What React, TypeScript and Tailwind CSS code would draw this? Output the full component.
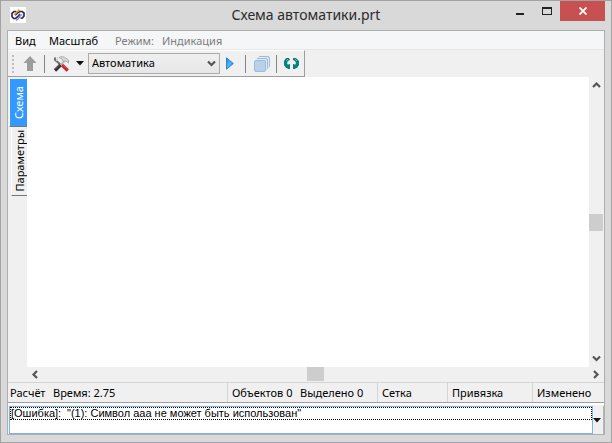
import { useState } from "react";

function AppLogo() {
  return (
    <svg width="16" height="16" viewBox="0 0 16 16" fill="none" aria-hidden="true" className="bg-white">
      <path d="M6.5 4.5H4L2 6.3V9.5L3.5 11.5H5.5L8 9.5L10 7" stroke="#2e2a5c" strokeWidth="1.7" />
      <path d="M5 8L8 5.5L10 4.5H12L14 6V9L12.5 11H10.5" stroke="#2e2a5c" strokeWidth="1.7" />
      <path d="M4.5 7.5L7 5L9.5 2.5" stroke="#f29a1f" strokeWidth="1.6" />
      <path d="M6 13.5L8.5 11.5L10 9L12 7.5" stroke="#8d89b8" strokeWidth="1.5" />
    </svg>
  );
}

function ArrowUpIcon() {
  return (
    <svg width="14" height="15" viewBox="0 0 14 15" aria-hidden="true">
      <path d="M7 0L13.5 7H10V15H4V7H0.5Z" fill="#9c9c9c" />
    </svg>
  );
}

function ToolsIcon() {
  return (
    <svg width="17" height="16" viewBox="0 0 17 16" fill="none" aria-hidden="true">
      <path d="M2 1.5V4L4 5.5L8 9" stroke="#6f6f6f" strokeWidth="2" />
      <path d="M4.5 1V3L3 4.5" stroke="#d6d6d6" strokeWidth="1.4" />
      <path d="M12 4.5L7 9.5" stroke="#b9bcbc" strokeWidth="2" />
      <path d="M6 1.5C8 0.2 11 0.4 13 2.2L15.5 4V7L12.8 5L10 5.4L9 3Z" fill="#d5d9d9" stroke="#9da2a2" strokeWidth="0.8" />
      <path d="M7.5 9L2 14.5" stroke="#303030" strokeWidth="3.2" />
      <path d="M6.5 9L2.5 13" stroke="#777" strokeWidth="0.8" />
      <path d="M9 9L14.8 14.5" stroke="#c91f2b" strokeWidth="3.2" />
      <path d="M10 9L14.5 13" stroke="#ee6b70" strokeWidth="0.8" />
    </svg>
  );
}

function PlayIcon() {
  return (
    <svg width="8" height="13" viewBox="0 0 8 13" aria-hidden="true">
      <defs>
        <linearGradient id="play" x1="0" x2="1" y1="0" y2="1">
          <stop offset="0" stopColor="#2f7fd0" />
          <stop offset="0.5" stopColor="#57b4f2" />
          <stop offset="1" stopColor="#1d7fd6" />
        </linearGradient>
      </defs>
      <path d="M0.5 0.8L7.3 6.5L0.5 12.2Z" fill="url(#play)" stroke="#2484d6" />
    </svg>
  );
}

function LayersIcon() {
  return (
    <svg width="16" height="16" viewBox="0 0 16 16" fill="#cadcee" stroke="#9dbddd" aria-hidden="true">
      <rect x="4.5" y="0.5" width="11" height="11" rx="1.5" />
      <rect x="3.5" y="1.5" width="11" height="11" rx="1.5" stroke="#dfeaf5" />
      <rect x="2.5" y="2.5" width="11" height="11" rx="1.5" />
      <rect x="1.5" y="3.5" width="11" height="11" rx="1.5" stroke="#dfeaf5" />
      <rect x="0.5" y="4.5" width="11" height="11" rx="1.5" fill="#b9d0e8" />
    </svg>
  );
}

function CycleIcon() {
  return (
    <svg width="15" height="11" viewBox="0 0 15 11" aria-hidden="true">
      <path d="M5 0H2L0 3V7L2 10H3L4 11H6V6H5L4 7L3 5L4 3L6 2Z" fill="#088080" />
      <path d="M9 0H12L15 3V7L13 10H12L11 11H9V6H10L11 7L12 5L11 3L9 2Z" fill="#088080" />
      <path d="M2 3L4 1M13 3L11 1" stroke="#70b5b5" />
    </svg>
  );
}

function Caret() {
  return (
    <svg width="8" height="5" viewBox="0 0 8 5" aria-hidden="true">
      <path d="M0 0H8L4 4.5Z" fill="#111" />
    </svg>
  );
}

const chevrons = {
  up: "M1 6L4.5 2.5L8 6",
  down: "M1 2.5L4.5 6L8 2.5",
  left: "M6 1L2.5 4.5L6 8",
  right: "M3 1L6.5 4.5L3 8",
};

function Chevron({ to }: { to: keyof typeof chevrons }) {
  return (
    <svg width="9" height="9" viewBox="0 0 9 9" fill="none" aria-hidden="true">
      <path d={chevrons[to]} stroke="#555" strokeWidth="2.2" />
    </svg>
  );
}

function Separator() {
  return <span className="h-[18px] w-px shrink-0 bg-[#858585]" />;
}

function TitleBar() {
  return (
    <header className="grid h-[29px] shrink-0 grid-cols-[1fr_auto_1fr] items-start">
      <div className="pt-1.5 pl-[9px]">
        <AppLogo />
      </div>
      <h1 className="pt-1 text-[14px] leading-5 text-[#2b2b2b]">Схема автоматики.prt</h1>
      <div className="flex justify-end pr-1.5">
        <button aria-label="Свернуть" className="flex h-5 w-[27px] items-center justify-center">
          <span className="mt-1.5 h-0.5 w-2 bg-[#222]" />
        </button>
        <button aria-label="Развернуть" className="flex h-5 w-[27px] items-center justify-center">
          <span className="h-2 w-2.5 border border-t-2 border-[#222]" />
        </button>
        <button aria-label="Закрыть" className="flex h-5 w-[45px] items-center justify-center bg-[#c75050]">
          <svg width="8" height="8" viewBox="0 0 8 8" aria-hidden="true">
            <path d="M0.5 0.5L7.5 7.5M7.5 0.5L0.5 7.5" stroke="#fff" strokeWidth="1.8" />
          </svg>
        </button>
      </div>
    </header>
  );
}

function MenuBar() {
  return (
    <nav className="flex h-[18px] shrink-0 items-end bg-[#f5f6f7] pl-[7px] text-[11px] leading-4">
      <button className="w-[34px] text-left">Вид</button>
      <button className="w-[66px] text-left">Масштаб</button>
      <span className="w-[47px] text-[#7d7d7d]">Режим:</span>
      <span className="text-[#7d7d7d]">Индикация</span>
    </nav>
  );
}

function Toolbar() {
  return (
    <div className="flex h-7 shrink-0 border-t border-[#e6e6e6]">
      <div className="flex w-[297px] items-center border-r border-b border-t border-t-white border-[#9d9d9d] pl-1">
        <span className="flex flex-col gap-0.5">
          {[0, 1, 2, 3, 4].map((dot) => (
            <i key={dot} className="size-0.5 bg-[#bdbdbd]" />
          ))}
        </span>
        <button aria-label="Вверх" className="ml-[9px]">
          <ArrowUpIcon />
        </button>
        <span className="w-[7px]" />
        <Separator />
        <button aria-label="Инструменты" className="ml-2">
          <ToolsIcon />
        </button>
        <button aria-label="Список инструментов" className="ml-1.5">
          <Caret />
        </button>
        <div className="relative ml-1 w-[132px]">
          <select
            aria-label="Режим работы"
            className="block h-[21px] w-full appearance-none border border-[#acacac] bg-linear-to-b from-[#f0f0f0] to-[#e6e6e6] pl-[3px] text-[11px] text-black"
          >
            <option>Автоматика</option>
          </select>
          <span className="pointer-events-none absolute top-1.5 right-1">
            <Chevron to="down" />
          </span>
        </div>
        <button aria-label="Пуск" className="ml-1.5 mr-[11px]">
          <PlayIcon />
        </button>
        <Separator />
        <button aria-label="Слои" className="mr-[6px] ml-2">
          <LayersIcon />
        </button>
        <Separator />
        <button aria-label="Обновить" className="ml-[7px]">
          <CycleIcon />
        </button>
      </div>
    </div>
  );
}

function SideTabs() {
  const [active, setActive] = useState("Схема");
  const tabs = [
    { name: "Схема", size: "h-12" },
    { name: "Параметры", size: "h-[69px]" },
  ];
  return (
    <div role="tablist" aria-orientation="vertical" className="flex w-[19px] shrink-0 flex-col items-end pt-[2px]">
      {tabs.map(({ name, size }) => (
        <button
          key={name}
          role="tab"
          aria-selected={name === active}
          onClick={() => setActive(name)}
          className={`${size} flex items-center justify-center border-b border-l border-b-[#777] text-[11px] leading-4 ${
            name === active ? "w-[18px] border-l-white bg-[#3399ff] text-white" : "w-4 border-l-white bg-[#f0f0f0] text-black"
          }`}
        >
          <span className="rotate-180 [writing-mode:vertical-rl]">{name}</span>
        </button>
      ))}
    </div>
  );
}

function Workspace() {
  return (
    <main className="flex min-h-0 flex-1">
      <SideTabs />
      <div className="flex min-w-0 flex-1 flex-col">
        <div className="flex min-h-0 flex-1">
          <div className="flex-1 bg-white" />
          <div className="flex w-[15px] flex-col items-center justify-between pr-px">
            <button aria-label="Прокрутить вверх" className="flex h-[17px] items-center">
              <Chevron to="up" />
            </button>
            <div className="h-[17px] w-3.5 bg-[#cdcdcd]" />
            <button aria-label="Прокрутить вниз" className="flex h-[17px] items-center">
              <Chevron to="down" />
            </button>
          </div>
        </div>
        <div className="flex h-[15px] items-center justify-between pb-px">
          <button aria-label="Прокрутить влево" className="flex w-[17px] justify-center">
            <Chevron to="left" />
          </button>
          <div className="h-3.5 w-[17px] bg-[#cdcdcd]" />
          <button aria-label="Прокрутить вправо" className="flex w-[17px] justify-center">
            <Chevron to="right" />
          </button>
        </div>
      </div>
    </main>
  );
}

function StatusBar() {
  const cell = "border-l border-[#d4d4d4] pl-1";
  return (
    <footer className="flex h-5 shrink-0 border-t border-[#d4d4d4] pr-0.5 text-[11px] leading-[19px] whitespace-nowrap">
      <div className="flex flex-1 pl-0.5">
        <span className="w-[43px]">Расчёт</span>
        <span>Время: 2.75</span>
      </div>
      <div className={`${cell} flex w-[150px]`}>
        <span className="w-[68px]">Объектов 0</span>
        <span>Выделено 0</span>
      </div>
      <span className={`${cell} w-[70px]`}>Сетка</span>
      <span className={`${cell} w-[85px]`}>Привязка</span>
      <span className={`${cell} w-[70px]`}>Изменено</span>
    </footer>
  );
}

function MessageList() {
  return (
    <section aria-label="Сообщения" className="flex h-8 shrink-0 border-t border-[#9d9d9d]">
      <div className="flex flex-1 border-t-2 border-l border-white border-l-[#f0f0f0] pt-px">
        <ul className="flex-1 border border-[#7eb4ea] bg-white font-['Liberation_Sans',sans-serif] text-[11px] leading-[11px]">
          <li className="flex border border-dotted border-black">
            <span className="w-14">[Ошибка]:</span>
            <span>"(1): Символ ааа не может быть использован"</span>
          </li>
        </ul>
        <button aria-label="Показать все сообщения" className="flex w-[11px] items-center border-r border-[#b5b5b5]">
          <Caret />
        </button>
      </div>
    </section>
  );
}

export default function App() {
  return (
    <div className="flex h-screen flex-col border border-[#a3a3a3] bg-[#d9d9d9] font-['Noto_Sans','Open_Sans',sans-serif] text-black">
      <TitleBar />
      <div className="mx-1.5 mb-[7px] flex min-h-0 flex-1 flex-col border border-[#aeaeae] bg-[#f0f0f0]">
        <MenuBar />
        <Toolbar />
        <Workspace />
        <StatusBar />
        <MessageList />
      </div>
    </div>
  );
}
